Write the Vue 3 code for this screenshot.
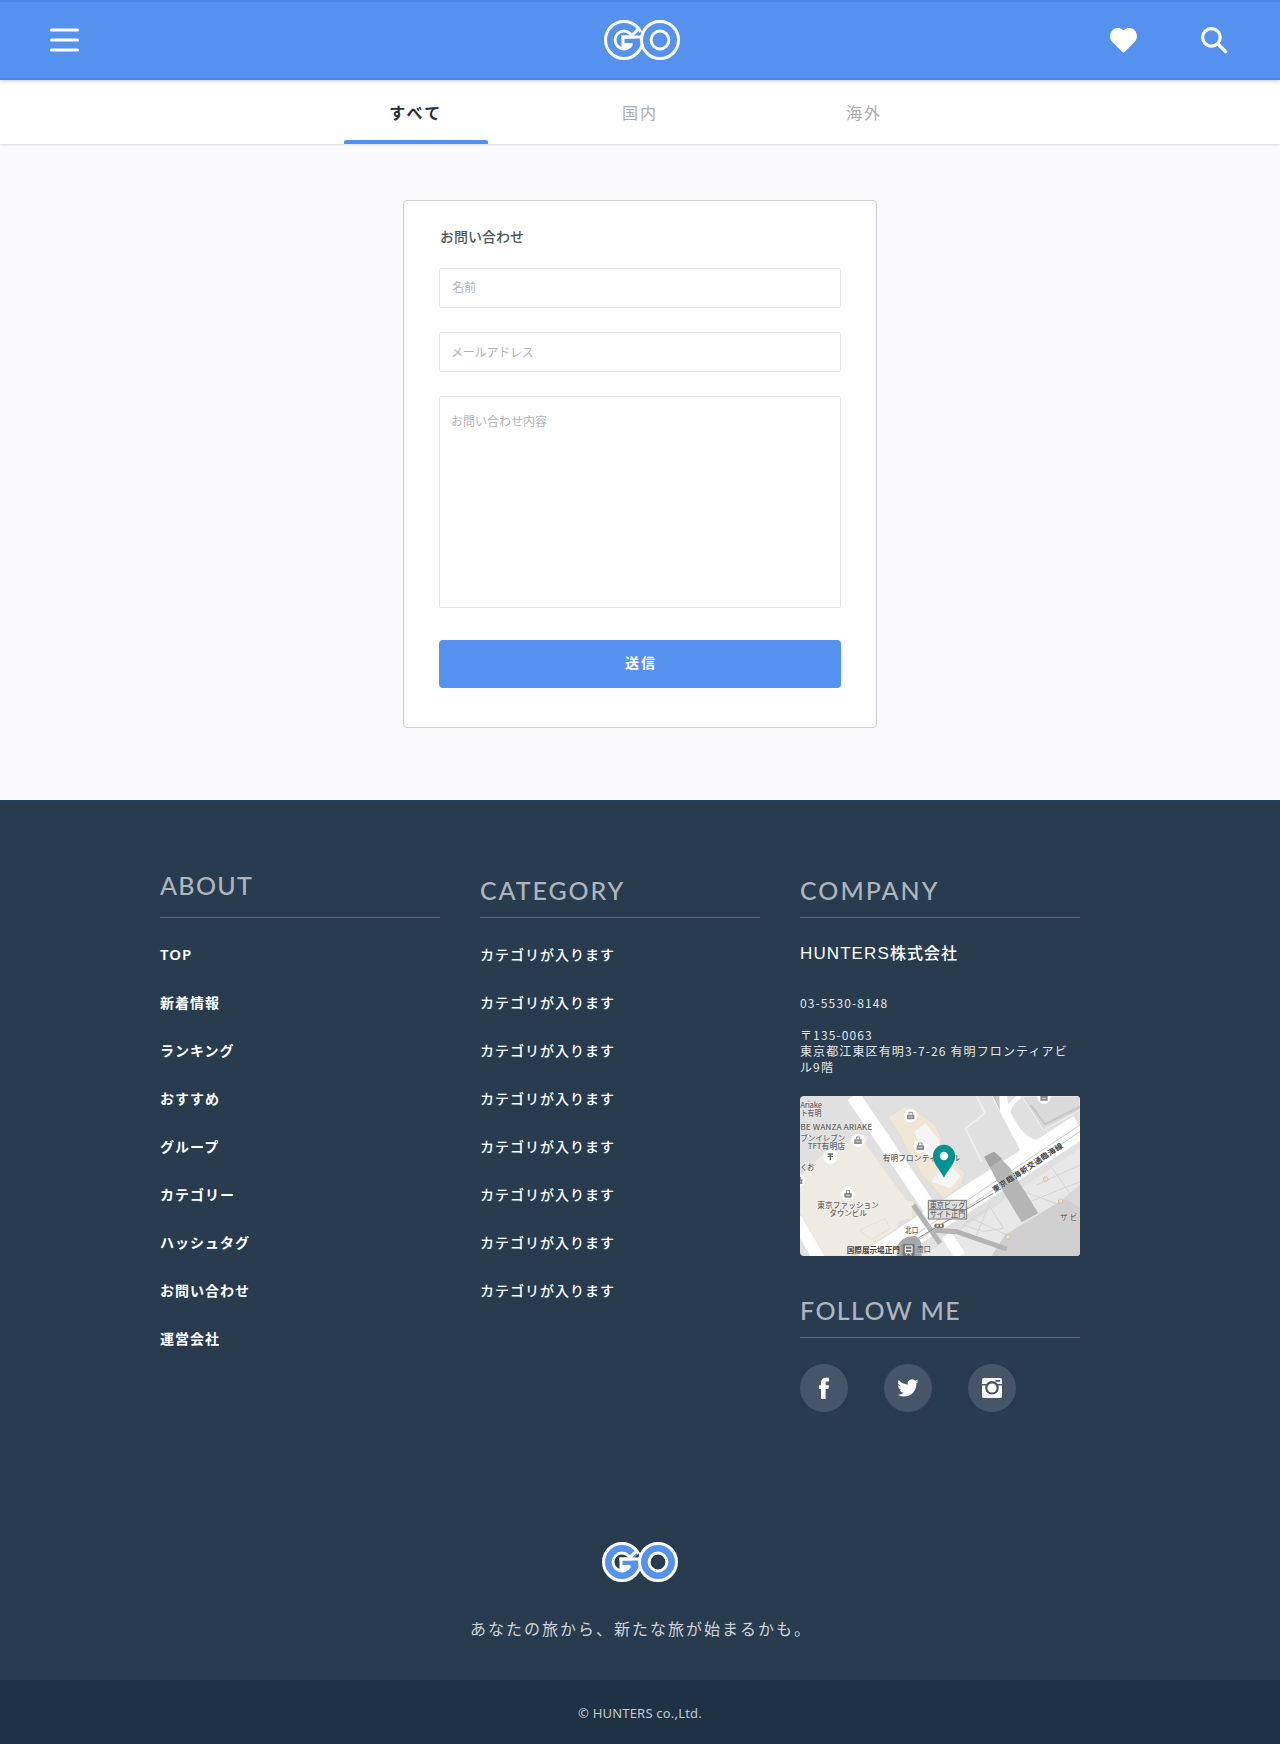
<script setup>
import { h } from 'vue'

const tabs = ['すべて', '国内', '海外']
const about = ['TOP', '新着情報', 'ランキング', 'おすすめ', 'グループ', 'カテゴリー', 'ハッシュタグ', 'お問い合わせ', '運営会社']
const categories = Array(8).fill('カテゴリが入ります')
const places = [[362, 92], [391, 184], [204, 166], [174, 327], [762, 36], [26, 286]]

const GoLogo = (props) => {
  const { blue, hole } = props
  return h('svg', { width: 76, height: 40, viewBox: '0 0 76 40' }, [
    h('circle', { cx: 20, cy: 20, r: 18.5, fill: blue, stroke: '#fff', 'stroke-width': 3 }),
    h('circle', { cx: 20, cy: 20, r: 10.4, fill: '#fff' }),
    h('path', { d: 'M17.5 26.9V15.4h8.3A7.4 7.4 0 1 0 17.5 26.9z', fill: hole }),
    h('path', { d: 'M20.5 18.5H37v6.500H28.500V23h-8z', fill: blue }),
    h('path', { d: 'M17.5 17H38M27.6 15.8l7.4-7.4', stroke: '#fff', 'stroke-width': 3, fill: 'none' }),
    h('path', { d: 'M33 15.2l4-4v4z', fill: hole }),
    h('circle', { cx: 56, cy: 20, r: 18.5, fill: blue, stroke: '#fff', 'stroke-width': 3 }),
    h('circle', { cx: 56, cy: 20, r: 8.9, fill: hole, stroke: '#fff', 'stroke-width': 3 }),
  ])
}
GoLogo.props = ['blue', 'hole']
</script>

<template>
  <div class="page">
    <header class="bar">
      <svg class="menu" width="29" height="24" viewBox="0 0 29 24">
        <path d="M1.5 2h26M1.5 12h26M1.5 22h26" stroke="#fff" stroke-width="3" stroke-linecap="round" />
      </svg>
      <GoLogo class="logo" blue="#5592f0" hole="#5592f0" />
      <div class="actions">
        <svg width="27" height="25" viewBox="0 0 27 25">
          <path d="M13.5 24.4c-.8 0-1.5-.6-2.3-1.4L2.4 14.1C-.8 10.8-.7 5.5 2.2 2.4 5.3-.6 10-.6 12.7 1.8l.8.7.8-.7c2.9-2.4 7.5-2.3 10.5.6 2.9 3.2 2.9 8.4-.2 11.7L15.8 23c-.8.8-1.5 1.4-2.3 1.4z" fill="#fff" />
        </svg>
        <svg width="27" height="27" viewBox="0 0 27 27">
          <circle cx="10.4" cy="10.4" r="8.8" fill="none" stroke="#fff" stroke-width="3.2" />
          <path d="M17 17l7.6 7.6" stroke="#fff" stroke-width="3.4" stroke-linecap="round" />
        </svg>
      </div>
    </header>

    <nav class="tabs">
      <a v-for="(t, i) in tabs" :key="t" class="tab" :class="{ active: i === 0 }">{{ t }}</a>
    </nav>

    <main>
      <form class="card" @submit.prevent>
        <h1>お問い合わせ</h1>
        <input class="name" type="text" placeholder="名前">
        <input class="mail" type="text" placeholder="メールアドレス">
        <textarea placeholder="お問い合わせ内容"></textarea>
        <button type="submit">送信</button>
      </form>
    </main>

    <footer>
      <div class="columns">
        <section>
          <h2 class="about">ABOUT</h2>
          <ul class="strong"><li v-for="a in about" :key="a">{{ a }}</li></ul>
        </section>
        <section>
          <h2 class="category">CATEGORY</h2>
          <ul><li v-for="(c, i) in categories" :key="i">{{ c }}</li></ul>
        </section>
        <section>
          <h2 class="company">COMPANY</h2>
          <p class="corp"><span>HUNTERS</span>株式会社</p>
          <p class="tel">03-5530-8148</p>
          <p class="address">〒135-0063<br>東京都江東区有明3-7-26 有明フロンティアビ<br>ル9階</p>
          <svg class="map" width="280" height="160" viewBox="30 33 840 480">
            <rect x="30" y="33" width="840" height="480" fill="#e0e0e0" />
            <path d="M400 513L870 190V513z" fill="#e8e8e8" />
            <!-- roads -->
            <path d="M190 33L430 385" stroke="#fff" stroke-width="42" fill="none" />
            <path d="M225 540L440 400 870 125" stroke="#fff" stroke-width="74" fill="none" />
            <path d="M20 400L95 530" stroke="#fff" stroke-width="42" fill="none" />
            <path d="M605 33L650 33 660 80 690 130Q720 170 755 165L690 225Q695 200 680 175z" fill="#fff" />
            <path d="M690 33Q640 70 660 105" stroke="#fff" stroke-width="14" fill="none" />
            <path d="M470 450L510 513" stroke="#fff" stroke-width="34" />
            <path d="M608 33h20l2 45z" fill="#c9c9c9" />
            <!-- blocks -->
            <path d="M695 33L760 135 870 75V33z" fill="#dadada" stroke="#f4f4f4" stroke-width="3" />
            <path d="M722 60L765 118 870 65" fill="none" stroke="#c8c8c8" stroke-width="7" />
            <path d="M30 275L100 205 215 147 235 155 230 180 350 345 370 350 368 400 330 408 322 430 240 482 185 513H105L30 385z" fill="#f0ebe2" stroke="#e8dbc5" stroke-width="2" />
            <path d="M210 435L285 400 300 430 245 465z" fill="none" stroke="#e2d6c3" stroke-width="2" />
            <path d="M293 98L345 63 380 78 435 120 455 160 450 185 525 265 515 300 460 342 425 300 395 270 350 190 325 140z" fill="#efe6d6" stroke="#e5d8c2" stroke-width="2" />
            <path d="M372 140L405 115 448 165 455 205 425 215 400 200z M455 240L480 240 512 275 480 310 425 290z" fill="#f5f5f5" />
            <path d="M560 33L585 85 527 130 575 230" fill="none" stroke="#efefef" stroke-width="6" />
            <!-- halls and walkways -->
            <path d="M520 420L600 365 640 430 580 440z M545 400L650 450 M600 350L560 450 M740 300L870 240 M700 320L840 370 M720 350L870 290 M780 240L850 340" fill="none" stroke="#d4d4d4" stroke-width="3" />
            <path d="M605 513L645 450 825 340 870 365V513z" fill="#cfcfcf" />
            <path d="M820 340l50-40v65z" fill="#d8d8d8" />
            <path d="M425 435L500 440 650 492 M370 360L450 475" fill="none" stroke="#b3b3b3" stroke-width="15" />
            <path d="M385 465L870 140 M375 450L870 120" fill="none" stroke="#c9c9c9" stroke-width="3" />
            <path d="M380 462L610 325" fill="none" stroke="#888" stroke-width="3" />
            <path d="M583 215L612 200 660 248 745 385 695 412 622 290z" fill="#b5b5b5" />
            <path d="M583 215l29-15 25 22-37 25z" fill="#a3a3a3" />
            <path d="M320 513V485Q340 450 375 453 400 462 395 513z" fill="#a6a6a6" />
            <g fill="#f4dfc5" stroke="#c9b493" stroke-width="2">
              <circle cx="767" cy="282" r="7" /><circle cx="812" cy="348" r="7" /><circle cx="654" cy="456" r="7" />
            </g>
            <rect x="433" y="416" width="29" height="13" rx="5" fill="#86705e" />
            <path d="M439 419h6v6h-6zM450 419h6v6h-6z" fill="#eee" />
            <!-- place markers -->
            <g v-for="p in places" :key="p[0]" :transform="`translate(${p[0]} ${p[1]})`">
              <circle r="20" fill="#fff" />
              <path d="M-11-3h22v14h-22z" fill="#8a8a8a" />
              <path d="M-5-3v-7H5v7" fill="none" stroke="#8a8a8a" stroke-width="3" />
              <path d="M-6 4H6" stroke="#fff" stroke-width="2" />
            </g>
            <g transform="translate(121 216)">
              <circle r="21" fill="#fff" />
              <path d="M-8-9H8M-8-2H8M0-9V10M0-2h6" fill="none" stroke="#666" stroke-width="4" />
            </g>
            <!-- labels -->
            <g class="labels">
              <text x="31" y="69" textLength="65">Ariake</text>
              <text x="32" y="92" textLength="62" lengthAdjust="spacingAndGlyphs">ト有明</text>
              <text x="31" y="136" textLength="216" lengthAdjust="spacingAndGlyphs">BE WANZA ARIAKE</text>
              <text x="31" y="168" textLength="135">ブンイレブン</text>
              <text x="53" y="191" textLength="112" lengthAdjust="spacingAndGlyphs">TFT有明店</text>
              <text x="31" y="256" textLength="42" lengthAdjust="spacingAndGlyphs">くお</text>
              <text x="278" y="227" textLength="232">有明フロンティアビル</text>
              <text x="82" y="370" textLength="185">東京ファッション</text>
              <text x="118" y="393" textLength="113">タウンビル</text>
              <text x="345" y="443" textLength="40" lengthAdjust="spacingAndGlyphs">北口</text>
              <text x="380" y="500" textLength="42" lengthAdjust="spacingAndGlyphs">南口</text>
              <text x="810" y="406" textLength="52">ザ ビ</text>
              <text class="dark" x="170" y="503" textLength="160">国際展示場正門</text>
              <text class="dark" transform="translate(614 323) rotate(-33.5)" textLength="247">東京臨海新交通臨海線</text>
            </g>
            <path d="M415 346h115v56H415zM415 374h115" fill="#dedede" stroke="#777" stroke-width="3" />
            <g class="labels boxed">
              <text x="419" y="368" textLength="107" lengthAdjust="spacingAndGlyphs">東京ビッグ</text>
              <text x="419" y="395" textLength="107" lengthAdjust="spacingAndGlyphs">サイト正門</text>
            </g>
            <rect x="338" y="477" width="36" height="36" rx="4" fill="#777" />
            <path d="M346 483h20v20h-20zM348 511l5-7M364 511l-5-7M346 493h20" fill="none" stroke="#fff" stroke-width="3" />
            <path d="M462 278C450 252 429 238 429 212a33 33 0 0 1 66 0C495 238 474 252 462 278z" fill="#009490" />
            <circle cx="462" cy="213" r="12.5" fill="#fff" />
          </svg>
          <h2 class="follow">FOLLOW ME</h2>
          <div class="social">
            <a><svg width="48" height="48" viewBox="0 0 48 48"><path d="M21 35V24.9h-2v-3.7h2v-2.5c0-3.3 1.8-5 4.9-5h3v3.8h-1.7c-1.2 0-1.6.6-1.6 1.6v2.1h3.3l-.4 3.7h-2.9V35z" /></svg></a>
            <a><svg width="48" height="48" viewBox="0 0 48 48"><path transform="translate(13.3 13.3) scale(.885)" d="M23.95 4.57a10 10 0 0 1-2.82.77 4.96 4.96 0 0 0 2.16-2.72c-.95.55-2 .95-3.13 1.18a4.92 4.92 0 0 0-8.38 4.48C7.69 8.09 4.07 6.13 1.64 3.16a4.92 4.92 0 0 0 1.52 6.57 4.9 4.9 0 0 1-2.23-.61v.06a4.92 4.92 0 0 0 3.95 4.83 5 5 0 0 1-2.21.08 4.94 4.94 0 0 0 4.6 3.42A9.87 9.87 0 0 1 0 19.54a14 14 0 0 0 7.55 2.21c9.05 0 14-7.5 14-13.98 0-.21 0-.42-.02-.63a9.94 9.94 0 0 0 2.46-2.55z" /></svg></a>
            <a><svg width="48" height="48" viewBox="0 0 48 48"><path fill-rule="evenodd" d="M16 14h16a2 2 0 0 1 2 2v4h-4.4a6.800 6.800 0 0 0-11.200 0H14v-4a2 2 0 0 1 2-2zm11.500 2v1.800h4.500V16zM14 21.500h3.600a6.800 6.800 0 1 0 12.800 0H34V32a2 2 0 0 1-2 2H16a2 2 0 0 1-2-2z" /><circle cx="24" cy="24" r="4.600" /></svg></a>
          </div>
        </section>
      </div>
      <GoLogo class="foot-logo" blue="#5592f0" hole="#283b4f" />
      <p class="tagline">あなたの旅から、新たな旅が始まるかも。</p>
      <div class="copyright">© HUNTERS co.,Ltd.</div>
    </footer>
  </div>
</template>

<style>
body { margin: 0; }
</style>

<style scoped>
.page, .page * { box-sizing: border-box; }
.page { width: 1280px; font-family: "Noto Sans CJK JP", sans-serif; background: #fafafc; }
h1, h2, p, ul { margin: 0; padding: 0; font-weight: 400; }
svg { display: block; }
.bar { position: relative; z-index: 2; height: 80px; padding: 0 52px 0 50px; display: grid; grid-template-columns: 554px 76px 1fr; align-items: center; background: #5592f0; border-top: 2px solid #4a88e7; border-bottom: 2px solid #4a88e7; box-shadow: 0 1px 4px rgba(0, 0, 0, .22); }
.actions { display: flex; justify-content: flex-end; align-items: center; gap: 64px; }
.tabs { position: relative; height: 64px; display: flex; justify-content: center; background: #fff; box-shadow: 0 1px 2px rgba(0, 0, 0, .12); }
.tab { width: 224px; display: flex; justify-content: center; position: relative; line-height: 64px; font-size: 16px; letter-spacing: 2px; color: #a9adb0; }
.active { color: #263238; font-weight: 700; letter-spacing: 2.5px; }
.active::after { content: ""; position: absolute; left: 40px; bottom: 0; width: 144px; height: 4px; background: #5592f0; border-radius: 2px 2px 0 0; }
main { height: 656px; padding-top: 56px; }
.card { width: 474px; height: 528px; margin: 0 auto; padding: 25px 35px 0; display: flex; flex-direction: column; background: #fff; border: 1px solid #cdcfd2; border-radius: 4px; }
h1 { font-size: 14px; line-height: 20px; font-weight: 500; color: #4d575c; margin: 0 0 22px 1px; }
input, textarea { display: block; width: 402px; height: 40px; margin: 0 0 24px; padding: 0 11px; border: 1px solid #e3e4e5; border-radius: 2px; background: #fff; font: 12px "Noto Sans CJK JP", sans-serif; outline: none; resize: none; }
.name { padding-left: 12px; padding-bottom: 4px; }
.mail { padding-bottom: 2px; letter-spacing: -.2px; }
textarea { height: 212px; margin-bottom: 32px; padding-top: 15px; }
::placeholder { color: #b1b4b6; opacity: 1; }
button { height: 48px; padding: 0 0 5px 2px; border: 0; border-radius: 4px; background: #5592f0; color: #fff; font: 700 14px "Noto Sans CJK JP", sans-serif; letter-spacing: 2px; }
footer { height: 944px; background: #283b4f; border-top: 2px solid #213f5c; display: flex; flex-direction: column; align-items: center; }
.columns { width: 960px; height: 740px; padding-top: 72px; display: flex; gap: 40px; }
section { width: 280px; }
h2 { height: 44px; border-bottom: 1px solid #5d6a77; font: 500 25px/32px Lato, sans-serif; color: #adb5bd; white-space: nowrap; }
.about { letter-spacing: 1.3px; line-height: 22px; }
.category { letter-spacing: 1.9px; }
.company { letter-spacing: 2px; }
.follow { letter-spacing: 1.4px; }
ul { list-style: none; padding-top: 12px; }
li { height: 48px; line-height: 48px; font-size: 14px; letter-spacing: 1px; font-weight: 500; color: #fff; }
.strong li { font-weight: 700; }
.strong li:first-child { font-family: "Noto Sans", sans-serif; font-size: 15px; font-weight: 600; letter-spacing: 1px; }
.corp { margin-top: 22px; font-size: 16px; line-height: 24px; letter-spacing: 1px; font-weight: 500; color: #fff; }
.corp span { font-family: "Liberation Sans", sans-serif; font-size: 17px; letter-spacing: 1.1px; font-weight: 400; }
.tel, .address { font-size: 12px; line-height: 16px; letter-spacing: 1.12px; color: #e4e7ea; white-space: nowrap; }
.tel { margin-top: 29px; }
.address { margin-top: 16px; }
.map { margin: 21px 0 38px; border-radius: 4px; }
.labels { font: 500 23px "Noto Sans CJK JP", sans-serif; fill: #666; paint-order: stroke; stroke: rgba(255, 255, 255, .4); stroke-width: 3px; }
.labels.boxed { stroke: none; }
.labels .dark { fill: #444; font-weight: 700; }
.social { display: flex; gap: 36px; padding-top: 26px; }
.social a { width: 48px; height: 48px; border-radius: 50%; background: #465567; }
.social path, .social circle { fill: #fff; }
.foot-logo { flex: none; }
.tagline { margin-top: 34px; padding-left: 2px; line-height: 24px; font-size: 16px; letter-spacing: 2px; color: #d0d4d9; }
.copyright { width: 100%; height: 64px; margin-top: auto; background: #1e3145; color: #c4cad0; text-align: center; font: 13px/66px "Noto Sans", sans-serif; letter-spacing: .2px; }
</style>
